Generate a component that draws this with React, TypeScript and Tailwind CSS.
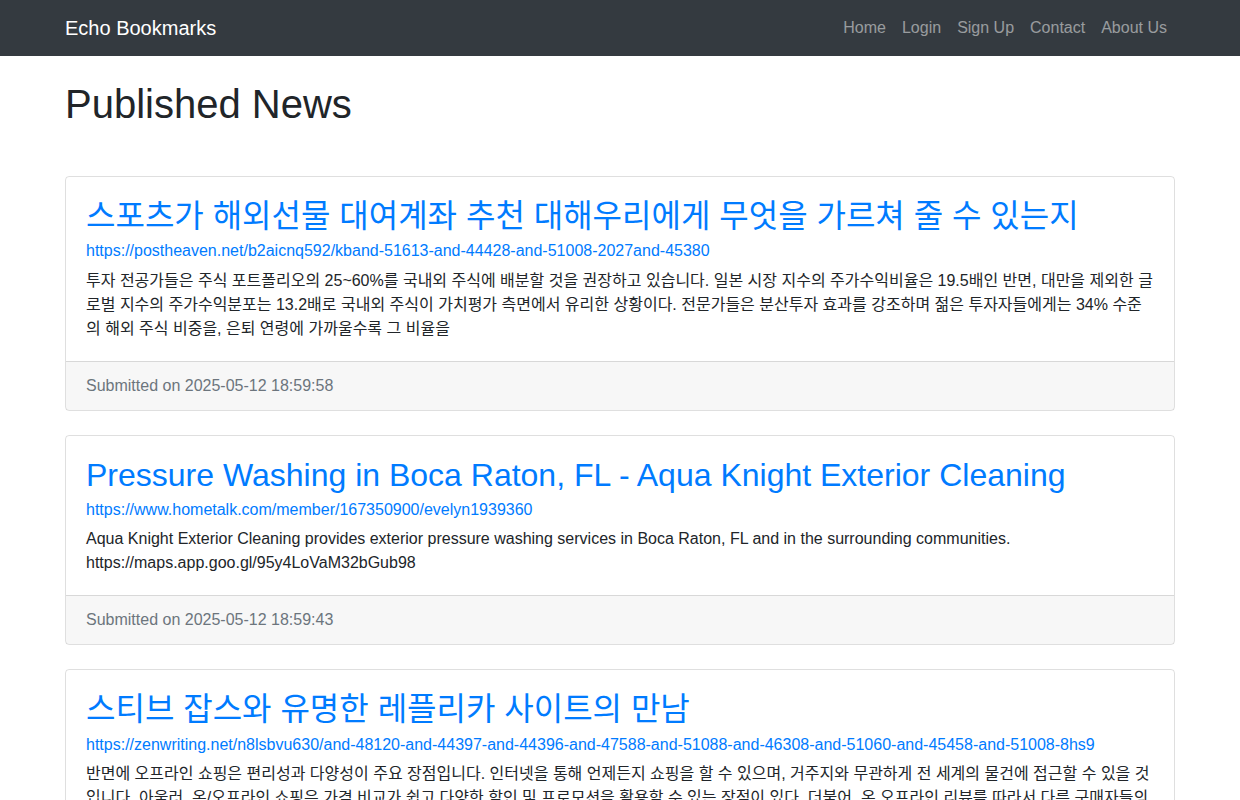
const font = "[font-family:'Liberation_Sans','Noto_Sans_CJK_KR',sans-serif]";

const items = [
  {
    title: "스포츠가 해외선물 대여계좌 추천 대해우리에게 무엇을 가르쳐 줄 수 있는지",
    url: "https://postheaven.net/b2aicnq592/kband-51613-and-44428-and-51008-2027and-45380",
    body: "투자 전공가들은 주식 포트폴리오의 25~60%를 국내외 주식에 배분할 것을 권장하고 있습니다. 일본 시장 지수의 주가수익비율은 19.5배인 반면, 대만을 제외한 글로벌 지수의 주가수익분포는 13.2배로 국내외 주식이 가치평가 측면에서 유리한 상황이다. 전문가들은 분산투자 효과를 강조하며 젊은 투자자들에게는 34% 수준의 해외 주식 비중을, 은퇴 연령에 가까울수록 그 비율을",
    date: "2025-05-12 18:59:58",
  },
  {
    title: "Pressure Washing in Boca Raton, FL - Aqua Knight Exterior Cleaning",
    url: "https://www.hometalk.com/member/167350900/evelyn1939360",
    body: "Aqua Knight Exterior Cleaning provides exterior pressure washing services in Boca Raton, FL and in the surrounding communities. https://maps.app.goo.gl/95y4LoVaM32bGub98",
    date: "2025-05-12 18:59:43",
  },
  {
    title: "스티브 잡스와 유명한 레플리카 사이트의 만남",
    url: "https://zenwriting.net/n8lsbvu630/and-48120-and-44397-and-44396-and-47588-and-51088-and-46308-and-51060-and-45458-and-51008-8hs9",
    body: "반면에 오프라인 쇼핑은 편리성과 다양성이 주요 장점입니다. 인터넷을 통해 언제든지 쇼핑을 할 수 있으며, 거주지와 무관하게 전 세계의 물건에 접근할 수 있을 것입니다. 아울러, 온/오프라인 쇼핑은 가격 비교가 쉽고 다양한 할인 및 프로모션을 활용할 수 있는 장점이 있다. 더불어, 온 오프라인 리뷰를 따라서 다른 구매자들의 경험을 참고할 수 있습니다.",
    date: "2025-05-12 18:59:30",
  },
];

export default function App() {
  return (
    <div className={`${font} bg-white text-[16px] leading-[24px] text-[#212529]`}>
      <nav className="bg-[#343a40] h-[56px]">
        <div className="mx-auto w-[1140px] h-full px-[15px] flex items-center justify-between">
          <a className="text-[20px] leading-[30px] text-white">Echo Bookmarks</a>
          <div className="flex">
            {["Home", "Login", "Sign Up", "Contact", "About Us"].map((l) => (
              <a key={l} className="px-[8px] text-[rgba(255,255,255,0.5)]">{l}</a>
            ))}
          </div>
        </div>
      </nav>
      <main className="mx-auto w-[1140px] px-[15px]">
        <h1 className="mt-[24px] mb-[48px] text-[40px] leading-[48px] font-normal">Published News</h1>
        {items.map((it) => (
          <div key={it.url} className="mb-[24px] border border-[rgba(0,0,0,0.125)] rounded-[4px]">
            <div className="p-[20px]">
              <h2 className="mb-[4px] text-[32px] leading-[38.4px] font-normal text-[#007bff]">{it.title}</h2>
              <a className="block text-[#007bff]">{it.url}</a>
              <p className="mt-[5.2px]">{it.body}</p>
            </div>
            <div className="px-[20px] py-[12px] bg-[rgba(0,0,0,0.03)] border-t border-[rgba(0,0,0,0.125)] text-[#6c757d]">
              Submitted on {it.date}
            </div>
          </div>
        ))}
      </main>
    </div>
  );
}
